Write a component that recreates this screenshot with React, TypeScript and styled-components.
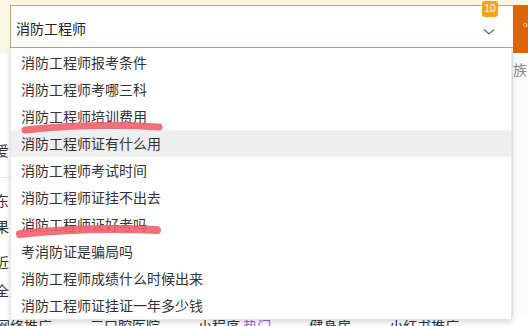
import React from "react";
import styled, { createGlobalStyle } from "styled-components";
import { Search } from "lucide-react";

const GlobalStyle = createGlobalStyle`
  body {
    margin: 0;
    background: #fff;
    font-family: "Noto Sans CJK SC", "Noto Sans", sans-serif;
    overflow: hidden;
  }
`;

const Page = styled.div`
  position: relative;
  width: 528px;
  height: 326px;
  overflow: hidden;
  background: #fff;
`;

const TopBand = styled.div`
  display: flex;
  padding: 5px 0 0 10px;
  background: #fcf6e8;
`;

const SearchBox = styled.div`
  position: relative;
  flex: 1;
  height: 43px;
  box-sizing: border-box;
  border: 1px solid #c9a66c;
  border-right: none;
  background: #fff;
  display: flex;
  align-items: center;
  padding: 3px 0 0 5px;
  font-size: 14px;
  color: #222;
`;

const Badge = styled.span`
  position: absolute;
  top: -5px;
  right: 15px;
  width: 16px;
  height: 16px;
  border-radius: 3px;
  background: #f4a21c;
  color: #fff;
  font-family: "Liberation Sans", sans-serif;
  font-size: 10px;
  line-height: 16px;
  text-align: center;
`;

const Chevron = styled.svg`
  position: absolute;
  right: 18px;
  top: 22px;
`;

const SearchButton = styled.div`
  width: 15px;
  height: 48px;
  background: #d9650d;
  color: #fff;
  overflow: hidden;
  display: flex;
  align-items: center;
  padding-left: 10px;
  box-sizing: border-box;
  padding-bottom: 8px;
`;

const Behind = styled.div`
  display: flex;
  justify-content: space-between;
  height: 262px;
`;

const SideCol = styled.div`
  width: 10px;
  overflow: hidden;
  display: flex;
  flex-direction: column;
`;

const SideGlyph = styled.div<{ $gap: number }>`
  margin-top: ${(p) => p.$gap}px;
  margin-left: -5px;
  font-size: 14px;
  line-height: 20px;
  height: 20px;
  color: #333;
`;

const SideRule = styled.div<{ $gap: number }>`
  margin-top: ${(p) => p.$gap}px;
  height: 1px;
  background: #e8e8e8;
`;

const RightCol = styled.div`
  width: 15px;
  overflow: hidden;
  border-left: 1px solid #ececec;
  background: #fbfbfb;
`;

const RightGlyph = styled.div`
  margin-top: 6px;
  font-size: 14px;
  line-height: 20px;
  color: #888;
  white-space: nowrap;
`;

const BottomRow = styled.div`
  display: flex;
  gap: 38px;
  margin-left: -4px;
  font-size: 14px;
  line-height: 20px;
  color: #333;
  white-space: nowrap;
`;

const Tag = styled.span`
  color: #a55ee0;
`;

const Dropdown = styled.ul`
  position: absolute;
  left: 10px;
  top: 48px;
  width: 502px;
  margin: 0;
  padding: 1px 0 0;
  list-style: none;
  background: #fff;
  box-shadow: 0 2px 6px rgba(0, 0, 0, 0.16);
  border: 1px solid #e6e6e6;
  border-top: none;
  box-sizing: border-box;
`;

const Option = styled.li<{ $active?: boolean }>`
  height: 27px;
  line-height: 27px;
  padding-left: 10px;
  font-size: 14px;
  color: #333;
  background: ${(p) => (p.$active ? "#efeff1" : "#fff")};
`;

const Marks = styled.svg`
  position: absolute;
  left: 0;
  top: 0;
  pointer-events: none;
`;

const suggestions = [
  "消防工程师报考条件",
  "消防工程师考哪三科",
  "消防工程师培训费用",
  "消防工程师证有什么用",
  "消防工程师考试时间",
  "消防工程师证挂不出去",
  "消防工程师证好考吗",
  "考消防证是骗局吗",
  "消防工程师成绩什么时候出来",
  "消防工程师证挂证一年多少钱",
];

export default function App() {
  return (
    <Page>
      <GlobalStyle />
      <TopBand>
        <SearchBox>
          消防工程师
          <Badge>10</Badge>
          <Chevron width="12" height="8" viewBox="0 0 12 8">
            <polyline points="1,1.5 6,6 11,1.5" fill="none" stroke="#666" strokeWidth="1.3" />
          </Chevron>
        </SearchBox>
        <SearchButton>
          <Search size={18} strokeWidth={2.4} />
        </SearchButton>
      </TopBand>

      <Behind>
        <SideCol>
          <SideGlyph $gap={87}>爱</SideGlyph>
          <SideRule $gap={17} />
          <SideGlyph $gap={12}>东</SideGlyph>
          <SideGlyph $gap={6}>果</SideGlyph>
          <SideGlyph $gap={16}>近</SideGlyph>
          <SideGlyph $gap={8}>全</SideGlyph>
        </SideCol>
        <RightCol>
          <RightGlyph>族系</RightGlyph>
        </RightCol>
      </Behind>
      <BottomRow>
        <span>网络推广</span>
        <span>三口腔医院</span>
        <span>小程序 <Tag>热门</Tag></span>
        <span>健身房</span>
        <span>小红书推广</span>
      </BottomRow>

      <Dropdown>
        {suggestions.map((s, i) => (
          <Option key={s} $active={i === 3}>
            {s}
          </Option>
        ))}
      </Dropdown>

      <Marks width="528" height="326" viewBox="0 0 528 326">
        <path
          d="M25 130 Q 90 123 159 127"
          fill="none"
          stroke="#f0606b"
          strokeOpacity="0.9"
          strokeWidth="7"
          strokeLinecap="round"
        />
        <path
          d="M20 234 Q 85 227 157 230"
          fill="none"
          stroke="#f0606b"
          strokeOpacity="0.9"
          strokeWidth="8"
          strokeLinecap="round"
        />
      </Marks>
    </Page>
  );
}
